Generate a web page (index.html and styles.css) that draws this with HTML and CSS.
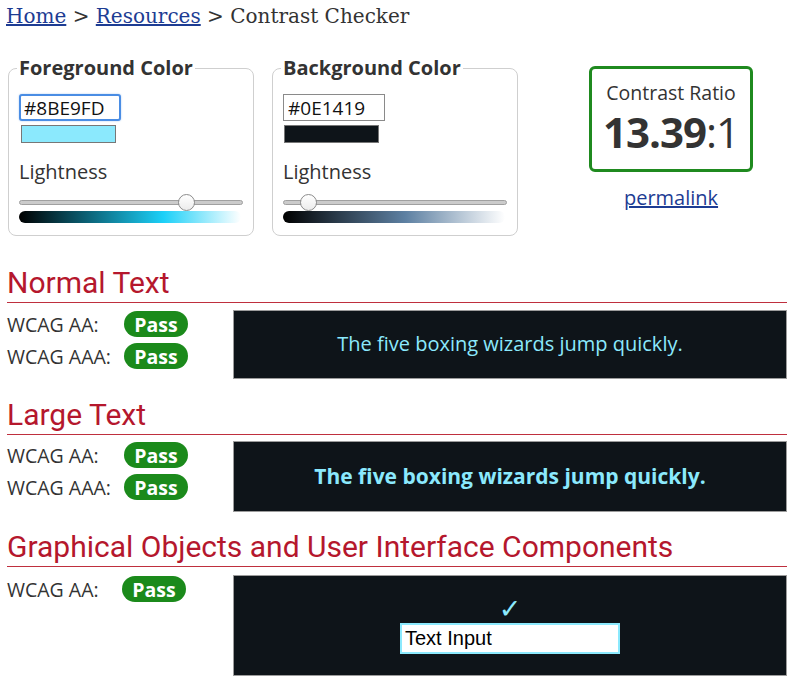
FILE: index.html
```html
<!DOCTYPE html>
<html lang="en">
<head>
<meta charset="utf-8">
<title>Contrast Checker</title>
<link rel="stylesheet" href="styles.css">
</head>
<body>
<nav class="crumbs"><a href="#">Home</a> &gt; <a href="#">Resources</a> &gt; Contrast Checker</nav>

<div class="top">
  <fieldset class="picker">
    <legend>Foreground Color</legend>
    <input class="hex hex-focus" type="text" value="#8BE9FD">
    <div class="swatch swatch-fg"></div>
    <div class="light-label">Lightness</div>
    <input class="slider" type="range" min="0" max="100" value="77">
    <div class="grad grad-fg"></div>
  </fieldset>

  <fieldset class="picker">
    <legend>Background Color</legend>
    <input class="hex" type="text" value="#0E1419">
    <div class="swatch swatch-bg"></div>
    <div class="light-label">Lightness</div>
    <input class="slider" type="range" min="0" max="100" value="8">
    <div class="grad grad-bg"></div>
  </fieldset>

  <div class="ratio-col">
    <div class="ratio-box">
      <div class="ratio-title">Contrast Ratio</div>
      <div class="ratio-value"><b>13.39</b>:1</div>
    </div>
    <a class="permalink" href="#">permalink</a>
  </div>
</div>

<section class="sec sec-first">
  <h2>Normal Text</h2>
  <div class="result">
    <div class="checks">
      <div class="row"><span class="lbl">WCAG AA:</span><span class="pass">Pass</span></div>
      <div class="row"><span class="lbl">WCAG AAA:</span><span class="pass">Pass</span></div>
    </div>
    <div class="preview preview-normal">The five boxing wizards jump quickly.</div>
  </div>
</section>

<section class="sec sec-large">
  <h2>Large Text</h2>
  <div class="result">
    <div class="checks">
      <div class="row"><span class="lbl">WCAG AA:</span><span class="pass">Pass</span></div>
      <div class="row"><span class="lbl">WCAG AAA:</span><span class="pass">Pass</span></div>
    </div>
    <div class="preview preview-large">The five boxing wizards jump quickly.</div>
  </div>
</section>

<section class="sec sec-last">
  <h2>Graphical Objects and User Interface Components</h2>
  <div class="result">
    <div class="checks">
      <div class="row"><span class="lbl lbl-gfx">WCAG AA:</span><span class="pass">Pass</span></div>
    </div>
    <div class="preview preview-gfx">
      <div class="check">✓</div>
      <div class="text-input">Text Input</div>
    </div>
  </div>
</section>
</body>
</html>
```

FILE: styles.css
```css
html, body {
  margin: 0;
  padding: 0;
  background: #fff;
}
body {
  padding: 0 13px 0 7px;
  color: #333;
  font-family: "Open Sans", "DejaVu Sans", sans-serif;
  font-size: 20px;
}

.crumbs {
  font-family: "DejaVu Serif", serif;
  font-size: 20px;
  line-height: 24px;
  padding-top: 4px;
  color: #333;
  margin-left: -1px;
}
.crumbs a {
  color: #1d3c93;
  text-decoration: underline;
}

.top {
  display: flex;
  align-items: flex-start;
  margin-top: 27px;
  margin-left: 1px;
}

.picker {
  width: 224px;
  margin: 0 18px 0 0;
  padding: 13px 10px 12px 10px;
  border: 1px solid #cfcfcf;
  border-radius: 8px;
  box-sizing: content-box;
  display: flex;
  flex-direction: column;
  align-items: flex-start;
}
.picker legend {
  font-weight: 700;
  font-size: 20px;
  line-height: 26px;
  padding: 0 2px;
  margin-left: -2px;
  color: #333;
}

.hex {
  font-family: "Open Sans", sans-serif;
  font-size: 19px;
  color: #111;
  width: 102px;
  height: 27px;
  box-sizing: border-box;
  padding: 0 4px;
  margin: 0;
  border: 1px solid #8a8a8a;
  border-radius: 0;
  background: #fff;
  outline: none;
}
.hex-focus {
  border: 2px solid #4a8de4;
  border-radius: 3px;
  padding: 0 3px;
  box-shadow: 0 0 2px #a9c8f0;
}

.swatch {
  width: 95px;
  height: 18px;
  box-sizing: border-box;
  margin: 4px 0 0 2px;
  border: 1px solid #777;
}
.swatch-fg { background: #8BE9FD; }
.swatch-bg { background: #0E1419; margin-left: 1px; }

.light-label {
  margin-top: 15px;
  line-height: 27px;
  color: #333;
}

.slider {
  -webkit-appearance: none;
  appearance: none;
  width: 224px;
  height: 18px;
  margin: 8px 0 0 0;
  background: transparent;
}
.slider::-webkit-slider-runnable-track {
  height: 5px;
  background: #cbcbcb;
  border: 1px solid #a0a0a0;
  border-radius: 3px;
}
.slider::-webkit-slider-thumb {
  -webkit-appearance: none;
  width: 17px;
  height: 17px;
  border-radius: 50%;
  background: linear-gradient(#ffffff, #ececec);
  border: 1px solid #8c8c8c;
  margin-top: -7px;
  box-sizing: border-box;
}

.grad {
  width: 222px;
  height: 12px;
  border-radius: 6px;
}
.grad-fg {
  background: linear-gradient(to right, #000 0%, #0b5f73 30%, #1cd0f8 65%, #ffffff 100%);
}
.grad-bg {
  background: linear-gradient(to right, #000 0%, #2b3c4c 25%, #5d80a2 55%, #ffffff 100%);
}

.ratio-col {
  margin-left: 53px;
  margin-top: 11px;
  display: flex;
  flex-direction: column;
  align-items: center;
  width: 164px;
}
.ratio-box {
  width: 164px;
  height: 106px;
  box-sizing: border-box;
  border: 3px solid #1f8a1f;
  border-radius: 6px;
  text-align: center;
  padding-top: 11px;
}
.ratio-title {
  font-size: 19.5px;
  line-height: 26px;
  color: #333;
}
.ratio-value {
  font-size: 42px;
  line-height: 52px;
  color: #333;
  letter-spacing: -1px;
}
.ratio-value b { font-weight: 700; }
.permalink {
  margin-top: 12px;
  color: #1d3c93;
  font-size: 20px;
  line-height: 28px;
}

.sec h2 {
  margin: 20px 0 0 0;
  font-family: Roboto, "Open Sans", sans-serif;
  font-weight: 400;
  font-size: 30px;
  line-height: 32px;
  height: 32px;
  padding: 0 0 3px 0;
  color: #b5172d;
  border-bottom: 1px solid #bf2f3e;
}
.sec-first h2 { margin-top: 31px; }
.sec-last h2 { margin-top: 19px; }

.result {
  display: flex;
  align-items: flex-start;
  margin-top: 7px;
}
.sec-large .result { margin-top: 6px; }
.sec-last .result { margin-top: 8px; }
.checks {
  width: 226px;
  padding-top: 1px;
  display: flex;
  flex-direction: column;
  gap: 6px;
}
.row {
  display: flex;
  align-items: center;
  height: 26px;
}
.lbl {
  width: 117px;
  color: #333;
  font-size: 19.5px;
}
.lbl-gfx { width: 115px; }
.pass {
  display: inline-flex;
  align-items: center;
  justify-content: center;
  width: 64px;
  height: 26px;
  border-radius: 13px;
  background: #1b8a1b;
  color: #fff;
  font-weight: 700;
  font-size: 19.5px;
}

.preview {
  flex: 1;
  background: #0E1419;
  border: 1px solid #9c9c9c;
  color: #8BE9FD;
  text-align: center;
  font-size: 20px;
}
.preview-normal {
  padding: 19px 0 21px;
  line-height: 27px;
}
.preview-large {
  padding: 21px 0 21px;
  line-height: 27px;
  font-size: 21px;
  font-weight: 700;
}
.preview-gfx {
  padding: 18px 0 21px;
  display: flex;
  flex-direction: column;
  align-items: center;
}
.check {
  font-family: "DejaVu Sans", sans-serif;
  font-weight: 700;
  font-size: 27px;
  line-height: 30px;
  color: #8BE9FD;
}
.text-input {
  width: 220px;
  height: 31px;
  box-sizing: border-box;
  border: 2px solid #8BE9FD;
  background: #fff;
  color: #000;
  font-family: "Liberation Sans", Arial, sans-serif;
  font-size: 20px;
  line-height: 27px;
  text-align: left;
  padding-left: 3px;
  margin-top: -1px;
}
```
